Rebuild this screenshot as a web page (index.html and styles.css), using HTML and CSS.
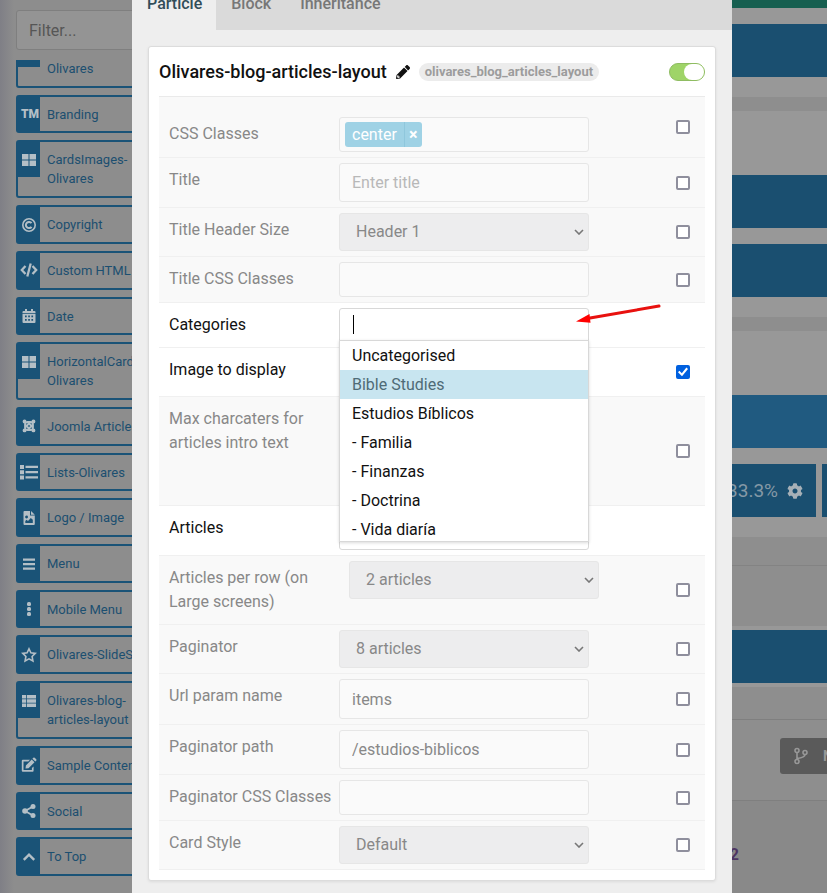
FILE: index.html
```html
<!DOCTYPE html>
<html lang="en">
<head>
<meta charset="utf-8">
<title>Layout Manager</title>
<link rel="stylesheet" href="styles.css">
</head>
<body>
<div class="page">
  <aside class="sidebar">
    <input class="filter" type="text" placeholder="Filter..." aria-label="Filter particles">
    <div class="scroller">
      <ul class="particles">
        <li><span class="ico"></span><span class="name"><br>Olivares</span></li>
        <li><span class="ico tm">TM</span><span class="name">Branding</span></li>
        <li><span class="ico"><svg viewBox="0 0 16 16"><path d="M1 2h6.500v5.600H1zM8.500 2H15v5.600H8.500zM1 8.600h6.500V14H1zM8.500 8.600H15V14H8.500z"/></svg></span><span class="name">CardsImages-<br>Olivares</span></li>
        <li><span class="ico"><svg viewBox="0 0 16 16" class="line"><circle cx="8" cy="8" r="6.200"/><path d="M10.500 9.800a3.100 3.100 0 1 1 0-3.600" stroke-width="2"/></svg></span><span class="name">Copyright</span></li>
        <li><span class="ico wide"><svg viewBox="0 0 18 16" class="line"><path d="M5.500 4L1.800 8l3.700 4M12.500 4l3.700 4-3.700 4M10.700 1.500L7.300 14.500" stroke-width="2.300"/></svg></span><span class="name">Custom HTML</span></li>
        <li><span class="ico"><svg viewBox="0 0 16 16"><path fill-rule="evenodd" d="M4 1h2v2h4V1h2v2h1.500q1 0 1 1v1.300h-13V4q0-1 1-1H4zM1.500 6h13v8q0 1-1 1h-11q-1 0-1-1zM4 7.500v1.700h1.700V7.500zm3.200 0v1.700h1.700V7.500zm3.200 0v1.700h1.700V7.500zM4 11v1.700h1.700V11zm3.200 0v1.700h1.700V11zm3.200 0v1.700h1.700V11z"/></svg></span><span class="name">Date</span></li>
        <li><span class="ico"><svg viewBox="0 0 16 16"><path d="M1 2h6.500v5.600H1zM8.500 2H15v5.600H8.500zM1 8.600h6.500V14H1zM8.500 8.600H15V14H8.500z"/></svg></span><span class="name">HorizontalCards-<br>Olivares</span></li>
        <li><span class="ico"><svg viewBox="0 0 16 16" class="line"><path d="M4 10V6.500Q4 4 6.500 4L12 9.500M6 4h3.500Q12 4 12 6.500L6.500 12M12 6v3.500q0 2.500-2.500 2.500L4 6.500M10 12H6.500Q4 12 4 9.500L9.500 4" stroke-width="1.800"/><path d="M3.500 3.500h.1M12.400 3.500h.1M3.500 12.400h.1M12.400 12.400h.1" stroke-width="3.800" stroke-linecap="round"/></svg></span><span class="name">Joomla Articles</span></li>
        <li><span class="ico wide"><svg viewBox="0 0 18 16"><path d="M0 1h4v4H0zM0 6.200h4v4H0zM0 11.400h4v4H0zM5.500 1.800H18v2.300H5.500zM5.500 7H18v2.300H5.500zM5.500 12.200H18v2.300H5.500z"/></svg></span><span class="name">Lists-Olivares</span></li>
        <li><span class="ico"><svg viewBox="0 0 16 16"><path fill-rule="evenodd" d="M3.500 1H9v4.500h4.800V14q0 1-1 1h-9.300q-1 0-1-1V2q0-1 1-1zM10 1l3.800 3.700H10zM5.500 5.500a1.400 1.400 0 1 0 .1 2.900 1.400 1.400 0 0 0-.1-2.900zM4.300 13h7.500V9.800L9.800 7.900 7 11 5.600 9.700 4.300 11z"/></svg></span><span class="name">Logo / Image</span></li>
        <li><span class="ico"><svg viewBox="0 0 16 16"><path d="M2 2.500h12v2.200H2zM2 7h12v2.200H2zM2 11.500h12v2.200H2z"/></svg></span><span class="name">Menu</span></li>
        <li><span class="ico"><svg viewBox="0 0 16 16"><rect x="6" y="1" width="4" height="4" rx="1.500"/><rect x="6" y="6" width="4" height="4" rx="1.500"/><rect x="6" y="11" width="4" height="4" rx="1.500"/></svg></span><span class="name">Mobile Menu</span></li>
        <li><span class="ico"><svg viewBox="0 0 16 16" class="line"><path d="M8 1.800l1.900 4 4.400.6-3.200 3.100.8 4.400L8 11.800l-3.900 2.100.8-4.400L1.700 6.400l4.400-.6z"/></svg></span><span class="name">Olivares-SlideShow</span></li>
        <li><span class="ico"><svg viewBox="0 0 16 16"><path d="M1 2h4v3.500H1zM5.800 2H15v3.500H5.800zM1 6.300h4v3.400H1zM5.800 6.300H15v3.400H5.800zM1 10.500h4V14H1zM5.800 10.500H15V14H5.800z"/></svg></span><span class="name">Olivares-blog-<br>articles-layout</span></li>
        <li><span class="ico"><svg viewBox="0 0 16 16"><path d="M9 2.800H1.800q-1 0-1 1v10q0 1 1 1h9.800q1 0 1-1V9.500l-1.700 1.600v2H2.500V4.500h4.800zM10.700 2.400l2.800 2.800-6 6-3 .4.400-3zM11.400 1.700l.9-.9q.7-.6 1.400 0l1.500 1.500q.6.700 0 1.400l-.9.900z"/></svg></span><span class="name">Sample Content</span></li>
        <li><span class="ico"><svg viewBox="0 0 16 16"><circle cx="4" cy="8" r="2.800"/><circle cx="12" cy="3.500" r="2.500"/><circle cx="12" cy="12.500" r="2.500"/><path d="M12 3.500L4 8l8 4.500" fill="none" stroke="currentColor" stroke-width="1.800"/></svg></span><span class="name">Social</span></li>
        <li><span class="ico"><svg viewBox="0 0 16 16" class="line"><path d="M2.800 10.800L8 5.600l5.200 5.200" stroke-width="2.400"/></svg></span><span class="name">To Top</span></li>
      </ul>
    </div>
  </aside>

  <main class="canvas">
    <div class="strip"></div>
    <section class="zone first"><div class="block"></div></section>
    <section class="zone gap-top"><div class="block"></div><div class="block"></div></section>
    <section class="zone gap-top">
      <div class="block section"></div>
      <div class="columns">
        <div class="block col">33.3% <svg viewBox="0 0 512 512"><path d="M487.400 315.700l-42.600-24.600c4.300-23.200 4.300-47 0-70.200l42.600-24.600c4.900-2.800 7.100-8.600 5.500-14-11.100-35.600-30-67.800-54.700-94.600-3.800-4.100-10-5.100-14.800-2.300L380.800 110c-17.900-15.400-38.500-27.300-60.800-35.100V25.800c0-5.600-3.900-10.500-9.400-11.700-36.700-8.200-74.300-7.800-109.200 0-5.500 1.200-9.400 6.100-9.400 11.700V75c-22.200 7.900-42.800 19.800-60.800 35.100L88.700 85.500c-4.900-2.800-11-1.900-14.800 2.300-24.700 26.700-43.600 58.900-54.700 94.600-1.700 5.400.6 11.200 5.500 14L67.300 221c-4.300 23.200-4.300 47 0 70.200l-42.600 24.600c-4.900 2.800-7.100 8.600-5.500 14 11.100 35.600 30 67.800 54.700 94.600 3.800 4.100 10 5.100 14.800 2.300l42.600-24.600c17.900 15.400 38.500 27.300 60.800 35.100v49.200c0 5.600 3.900 10.500 9.400 11.700 36.700 8.200 74.300 7.800 109.200 0 5.500-1.200 9.400-6.100 9.400-11.700v-49.200c22.200-7.900 42.800-19.800 60.800-35.100l42.600 24.600c4.900 2.800 11 1.900 14.800-2.300 24.700-26.700 43.600-58.900 54.700-94.600 1.500-5.500-.7-11.300-5.600-14.100zM256 336c-44.100 0-80-35.900-80-80s35.900-80 80-80 80 35.900 80 80-35.900 80-80 80z"/></svg></div>
        <div class="block next"></div>
      </div>
    </section>
    <div class="divider"></div>
    <section class="zone offcanvas"><div class="block"></div></section>
    <div class="actions">
      <button class="branch" type="button"><svg viewBox="0 0 16 18" class="line"><circle cx="4" cy="3.500" r="2"/><circle cx="4" cy="14.500" r="2"/><circle cx="12" cy="5.500" r="2"/><path d="M4 5.500v7M12 7.500q0 3-8 4"/></svg>N</button>
    </div>
    <footer class="version"><a href="#">2</a></footer>
  </main>
</div>

<div class="overlay">
  <div class="modal" role="dialog" aria-label="Particle settings">
    <nav class="tabs">
      <a href="#" class="active">Particle</a><a href="#">Block</a><a href="#">Inheritance</a>
    </nav>
    <form class="card">
      <header class="card-head">
        <h4>Olivares-blog-articles-layout</h4>
        <svg class="pencil" viewBox="0 0 512 512"><path d="M497.900 142.100l-46.100 46.100c-4.700 4.700-12.300 4.700-17 0l-111-111c-4.700-4.700-4.700-12.300 0-17l46.100-46.100c18.700-18.700 49.100-18.700 67.900 0l60.100 60.100c18.800 18.700 18.800 49.100 0 67.900zM284.200 99.800L21.600 362.400.4 483.900c-2.900 16.400 11.400 30.600 27.800 27.800l121.500-21.300 262.600-262.600c4.700-4.700 4.700-12.300 0-17l-111-111c-4.800-4.700-12.400-4.700-17.100 0zM88 424h48v36.300l-64.500 11.300-31.100-31.100L51.700 376H88v48z"/></svg>
        <span class="badge">olivares_blog_articles_layout</span>
        <input class="toggle" type="checkbox" checked aria-label="Enabled">
      </header>

      <div class="row lead">
        <label for="css">CSS Classes</label>
        <div class="control"><div class="box short"><span class="tag"><span>center</span><button type="button" aria-label="Remove">×</button></span><input id="css" type="text"></div></div>
        <input class="check" type="checkbox" aria-label="Override CSS Classes">
      </div>
      <div class="row">
        <label for="title">Title</label>
        <div class="control"><input class="box" id="title" type="text" placeholder="Enter title"></div>
        <input class="check" type="checkbox" aria-label="Override Title">
      </div>
      <div class="row">
        <label for="size">Title Header Size</label>
        <div class="control select"><select id="size"><option>Header 1</option></select><svg viewBox="0 0 10 6"><path d="M1 1l4 4 4-4"/></svg></div>
        <input class="check" type="checkbox" aria-label="Override Title Header Size">
      </div>
      <div class="row">
        <label for="tcss">Title CSS Classes</label>
        <div class="control"><input class="box short" id="tcss" type="text"></div>
        <input class="check" type="checkbox" aria-label="Override Title CSS Classes">
      </div>
      <div class="row on">
        <label for="cat">Categories</label>
        <div class="control">
          <div class="box open"><span class="caret"></span><input id="cat" type="text"></div>
          <ul class="menu">
            <li>Uncategorised</li>
            <li class="hover">Bible Studies</li>
            <li>Estudios Bíblicos</li>
            <li>- Familia</li>
            <li>- Finanzas</li>
            <li>- Doctrina</li>
            <li>- Vida diaría</li>
          </ul>
          <svg class="arrow" viewBox="0 0 88 22"><path d="M83 3L14 15" stroke="#e8110f" stroke-width="3" stroke-linecap="round"/><path d="M0 18.500L13.500 11l1 8.800z" fill="#f00"/></svg>
        </div>
      </div>
      <div class="row on image">
        <span class="label">Image to display</span>
        <div class="control"></div>
        <input class="check" type="checkbox" checked aria-label="Override Image to display">
      </div>
      <div class="row max">
        <span class="label">Max charcaters for articles intro text</span>
        <div class="control"></div>
        <input class="check" type="checkbox" aria-label="Override Max characters">
      </div>
      <div class="row on">
        <label for="articles">Articles</label>
        <div class="control"><input class="box" id="articles" type="text"></div>
      </div>
      <div class="row">
        <label for="per">Articles per row (on Large screens)</label>
        <div class="control select indent"><select id="per"><option>2 articles</option></select><svg viewBox="0 0 10 6"><path d="M1 1l4 4 4-4"/></svg></div>
        <input class="check" type="checkbox" aria-label="Override Articles per row">
      </div>
      <div class="row">
        <label for="pag">Paginator</label>
        <div class="control select"><select id="pag"><option>8 articles</option></select><svg viewBox="0 0 10 6"><path d="M1 1l4 4 4-4"/></svg></div>
        <input class="check" type="checkbox" aria-label="Override Paginator">
      </div>
      <div class="row">
        <label for="url">Url param name</label>
        <div class="control"><input class="box tall" id="url" type="text" value="items"></div>
        <input class="check" type="checkbox" aria-label="Override Url param name">
      </div>
      <div class="row">
        <label for="path">Paginator path</label>
        <div class="control"><input class="box" id="path" type="text" value="/estudios-biblicos"></div>
        <input class="check" type="checkbox" aria-label="Override Paginator path">
      </div>
      <div class="row">
        <label for="pcss">Paginator CSS Classes</label>
        <div class="control"><input class="box short" id="pcss" type="text"></div>
        <input class="check" type="checkbox" aria-label="Override Paginator CSS Classes">
      </div>
      <div class="row">
        <label for="style">Card Style</label>
        <div class="control select"><select id="style"><option>Default</option></select><svg viewBox="0 0 10 6"><path d="M1 1l4 4 4-4"/></svg></div>
        <input class="check" type="checkbox" aria-label="Override Card Style">
      </div>
    </form>
  </div>
</div>
</body>
</html>
```

FILE: styles.css
```css
* { box-sizing: border-box; }
body {
  margin: 0;
  font: 16px/24px Roboto, "Liberation Sans", sans-serif;
  color: #111;
  overflow: hidden;
}
ul { list-style: none; margin: 0; padding: 0; }
a { text-decoration: none; color: inherit; }
input, select, button { font: inherit; color: inherit; margin: 0; }
svg { fill: currentColor; display: block; }
svg.line { fill: none; stroke: currentColor; stroke-width: 1.6; }

/* Page behind the dialog */
.page { display: flex; height: 100vh; background: #8e8e8e; overflow: hidden; }
.sidebar {
  width: 190px;
  flex: none;
  display: flex;
  flex-direction: column;
  padding: 10px 0 17px 16px;
  background: linear-gradient(90deg, #7f7f86, #8d8d8d 14px);
}
.filter {
  height: 40px;
  width: 100%;
  flex: none;
  padding: 0 12px;
  border: 1px solid #7f7f7f;
  border-radius: 3px;
  background: #949494;
  outline: 0;
}
.filter::placeholder { color: #565656; opacity: 1; }
.scroller { flex: 1; min-height: 0; margin-top: 10px; overflow: hidden; display: flex; }
.particles { display: flex; flex-direction: column; gap: 7px; flex: 1; margin-top: -30px; }
.particles li {
  flex: 1 0 auto;
  display: flex;
  align-items: flex-start;
  border: 2px solid #1a5377;
  border-radius: 3px;
  font-size: 13px;
  line-height: 19px;
  color: #1c4f70;
}
.ico {
  width: 22px;
  height: 35px;
  flex: none;
  display: flex;
  align-items: center;
  justify-content: center;
  margin-bottom: -1px;
  background: #1a5377;
  color: #b4bfc6;
}
.ico svg { width: 16px; height: 16px; flex: none; }
.ico.wide svg { width: 18px; }
.ico.tm { font-size: 12px; font-weight: 900; padding-left: 2px; }
.name { padding: 8px 7px 7px; white-space: nowrap; }

.canvas { flex: 1; display: flex; flex-direction: column; min-width: 0; }
.strip { height: 8px; background: #165f50; }
.zone { display: flex; flex-direction: column; gap: 16px; padding: 64px 0 20px; background: #989898; }
.zone.first { padding-top: 16px; }
.zone.gap-top { margin-top: 14px; }
.zone.offcanvas { padding: 4px 0; }
.block { height: 53px; background: #1a4f70; }
.block.section { background: #205a80; }
.columns { display: flex; gap: 6px; }
.col {
  flex: 1;
  display: flex;
  align-items: center;
  justify-content: flex-end;
  gap: 9px;
  padding-right: 13px;
  font-size: 19px;
  color: #8599a6;
}
.col svg { width: 16px; height: 16px; color: #a6b0b7; }
.next { width: 5px; }
.divider { height: 89px; padding-top: 28px; }
.divider::before { content: ""; display: block; border-top: 1px solid #838383; }
.actions {
  margin-top: 32px;
  padding: 18px 0 26px;
  border-top: 1px solid #7f7f7f;
  border-bottom: 1px solid #7f7f7f;
  display: flex;
  justify-content: flex-end;
  overflow: hidden;
}
.branch {
  display: flex;
  align-items: center;
  gap: 14px;
  width: 47px;
  height: 36px;
  flex: none;
  padding: 0 0 0 13px;
  border: 0;
  border-radius: 3px 0 0 3px;
  background: #5a5a5a;
  color: #989898;
  font-size: 14px;
  font-weight: 700;
  overflow: hidden;
}
.branch svg { width: 16px; height: 18px; flex: none; }
.version { flex: 1; padding: 42px 88px 0 0; background: #898989; text-align: right; font-weight: 700; color: #4d3562; }

/* Dialog */
.overlay {
  position: fixed;
  inset: 0;
  display: flex;
  flex-direction: column;
  padding: 0 95px 0 132px;
  overflow: hidden;
}
.modal { min-height: 100%; background: #eee; padding-bottom: 12px; }
.tabs {
  display: flex;
  height: 52px;
  margin-top: -22px;
  line-height: 52px;
  font-weight: 500;
  color: #777;
  background: #dadada;
}
.tabs a { padding: 0 14px 0 15px; }
.tabs .active { background: #eee; color: #314d59; }
.card {
  margin: 16px;
  padding: 0 10px 10px;
  background: #fff;
  border: 1px solid #dcdcdc;
  border-radius: 3px;
  box-shadow: 0 1px 3px rgba(0, 0, 0, .08);
}
.card-head { display: flex; align-items: center; height: 50px; border-bottom: 1px solid #eaeaea; }
.card-head h4 { margin: 0; font-size: 18px; font-weight: 500; color: #111; }
.pencil { width: 14px; height: 14px; margin: 0 9px 0 9px; }
.badge {
  padding: 0 6px;
  border-radius: 9px;
  background: #ececec;
  color: #9c9c9c;
  font-size: 13px;
  font-weight: 700;
  line-height: 18px;
}
.toggle {
  appearance: none;
  width: 36px;
  height: 18px;
  margin-left: auto;
  border-radius: 9px;
  border: 1px solid #8fbc62;
  background: #9fd468;
  display: flex;
  justify-content: flex-end;
}
.toggle::before { content: ""; width: 20px; border-radius: 8px; background: #fff; }

.row {
  display: flex;
  align-items: flex-start;
  padding: 5px 15px 5px 10px;
  border-bottom: 1px solid #f0f0f0;
  background: #f9f9f9;
  color: #888;
}
.row.on { background: #fff; color: #111; }
.row > label, .row > .label { width: 170px; flex: none; padding: 5px 0; }
.row.lead > label { padding-top: 20px; }
.row.lead .control { margin-top: 15px; }
.row.image { min-height: 49px; }
.row.max { min-height: 109px; }
.control { width: 250px; flex: none; position: relative; display: flex; }
.control.indent { margin-left: 10px; }
.box {
  width: 100%;
  height: 39px;
  padding: 0 12px;
  border: 1px solid #e6e6e6;
  border-radius: 3px;
  background: #fafafa;
  outline: 0;
}
.box.short { height: 35px; }
.box.tall { height: 40px; }
.box::placeholder { color: #b8b8b8; opacity: 1; }
.on .box { background: #fff; border-color: #d8d8d8; }
div.box { display: flex; align-items: center; }
div.box input { flex: 1; min-width: 0; border: 0; padding: 0; background: none; outline: 0; }
div.box.short { padding: 0 5px; }
.tag { display: flex; height: 25px; border-radius: 3px; background: #9fd2e5; color: #fff; line-height: 25px; }
.tag span { padding: 0 7px; }
.tag button {
  width: 18px;
  padding: 0;
  border: 0;
  border-left: 1px solid #8fc7dc;
  background: none;
  font-weight: 700;
  line-height: 25px;
}
.select select {
  appearance: none;
  width: 100%;
  height: 38px;
  padding: 0 16px;
  border: 1px solid #e6e6e6;
  border-radius: 3px;
  background: #ededee;
}
.select svg {
  position: absolute;
  right: 5px;
  top: 16px;
  width: 10px;
  height: 6px;
  fill: none;
  stroke: #777;
  stroke-width: 1.6;
}
.check {
  appearance: none;
  width: 14px;
  height: 14px;
  margin-left: auto;
  align-self: center;
  border: 2px solid #8f8f9d;
  border-radius: 2px;
  background: #fff;
}
.check:checked { background: #0060df; border-color: #0060df; }
.check:checked::before {
  content: "";
  display: block;
  height: 10px;
  background: #fff;
  clip-path: polygon(0 53%, 14% 38%, 38% 62%, 84% 6%, 100% 20%, 40% 92%);
}

/* Open category picker */
.box.open { height: 33px; border-radius: 3px 3px 0 0; padding-left: 13px; }
.caret { width: 1px; height: 19px; background: #000; }
.menu {
  position: absolute;
  z-index: 2;
  top: 32px;
  left: 0;
  right: 0;
  border: 1px solid #d8d8d8;
  background: #fff;
  box-shadow: 0 1px 3px rgba(0, 0, 0, .15);
  overflow: hidden;
  height: 202px;
}
.menu li { padding: 0 12px; line-height: 29px; }
.menu .hover { background: #c8e5f0; color: #4f6b76; }
.arrow { position: absolute; left: 237px; top: -5px; width: 88px; height: 22px; z-index: 3; }
```
